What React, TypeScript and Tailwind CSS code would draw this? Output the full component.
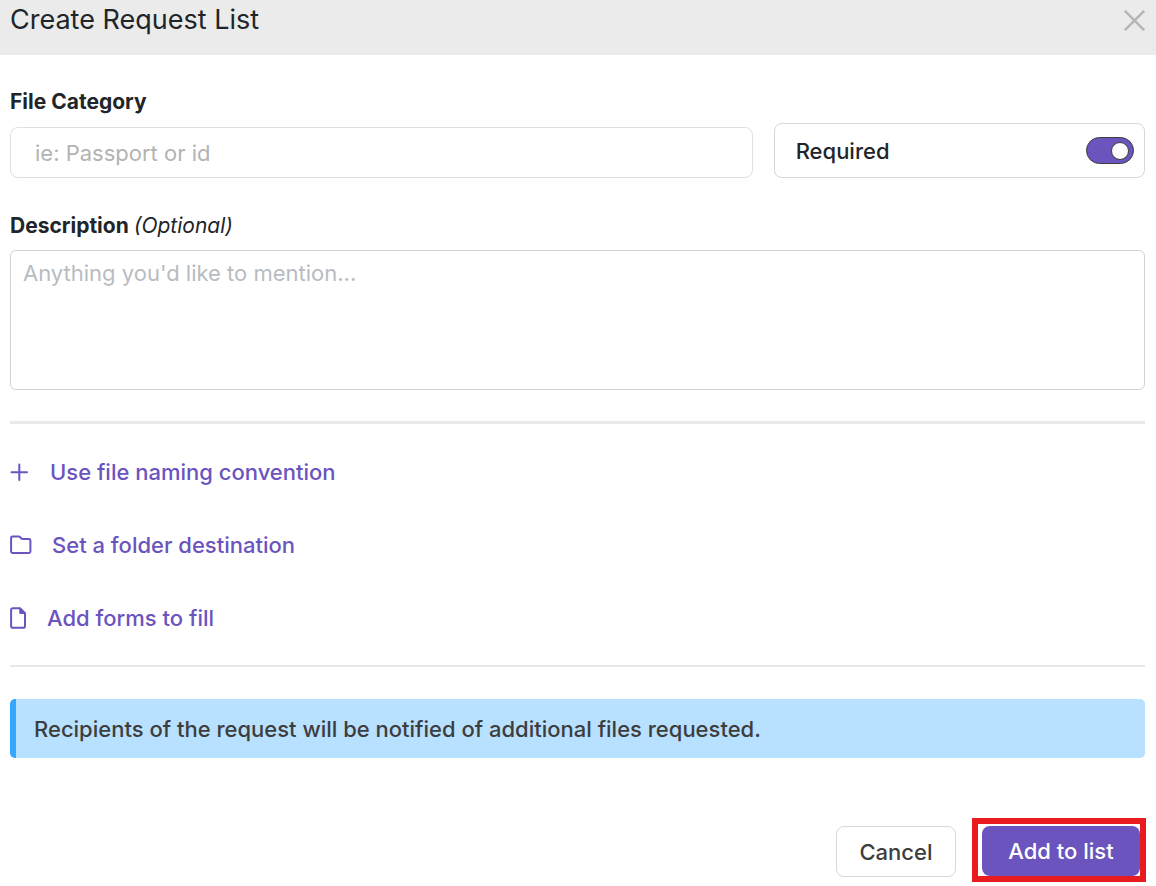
import { useState } from "react";

function PlusIcon() {
  return (
    <svg width="18" height="18" viewBox="0 0 18 18" fill="none" stroke="currentColor" strokeWidth="2" strokeLinecap="round" aria-hidden="true">
      <path d="M9.300 1.500v15.500M1.500 9.300h15.500" />
    </svg>
  );
}

function FolderIcon() {
  return (
    <svg width="22" height="20" viewBox="0 0 22 20" fill="none" stroke="currentColor" strokeWidth="2" strokeLinejoin="round" aria-hidden="true">
      <path d="M2.500 1.500h6.200c.5 0 .9.200 1.200.500l1.500 1.500c.3.300.7.500 1.200.500h6.400c.8 0 1.400.600 1.400 1.400v11.200c0 .8-.6 1.400-1.400 1.400H2.500c-.8 0-1.400-.6-1.400-1.400V2.900c0-.8.6-1.400 1.400-1.400z" />
    </svg>
  );
}

function FileIcon() {
  return (
    <svg width="17" height="22" viewBox="0 0 17 22" fill="none" stroke="currentColor" strokeWidth="2" strokeLinejoin="round" aria-hidden="true">
      <path d="M2.900 1.200h7.100L15 6.200v12.700c0 1-.8 1.800-1.800 1.800H2.900c-1 0-1.800-.8-1.800-1.800V3c0-1 .8-1.800 1.800-1.800z" />
      <path d="M9.800 1.200V6.400H15z" fill="currentColor" strokeWidth="1" />
    </svg>
  );
}

export default function App() {
  const [required, setRequired] = useState(true);

  return (
    <main className="bg-white font-['Inter','Noto_Sans',sans-serif] text-[22px] leading-6 text-[#212529]">
      <header className="flex items-start justify-between bg-[#ebebeb] pt-1 pr-[11px] pb-[19px] pl-[10px]">
        <h1 className="text-[27px] leading-8 font-normal">Create Request List</h1>
        <button type="button" aria-label="Close" className="mt-[6px] text-[#b5b5b5]">
          <svg width="21" height="21" viewBox="0 0 21 21" fill="none" stroke="currentColor" strokeWidth="2.400" aria-hidden="true">
            <path d="M.8.8l19.400 19.400M20.200.8L.8 20.200" />
          </svg>
        </button>
      </header>

      <form id="request-form" className="pr-[11px] pl-[10px]" onSubmit={(e) => e.preventDefault()}>
        <div className="grid grid-cols-[2fr_1fr] items-end gap-[21px] pt-[35px]">
          <div>
            <label htmlFor="category" className="block text-[21px] leading-6 font-bold">File Category</label>
            <input
              id="category"
              type="text"
              placeholder="ie: Passport or id"
              className="mt-[13px] block h-[51px] w-full rounded-lg border border-[#dee0e2] px-6 placeholder:text-[#b3b3b3]"
            />
          </div>
          <label className="relative flex h-[55px] cursor-pointer items-center justify-between rounded-lg border border-[#d5d7d9] pr-[10px] pl-[21px] font-medium">
            Required
            <input
              type="checkbox"
              role="switch"
              checked={required}
              onChange={(e) => setRequired(e.target.checked)}
              className="peer sr-only"
            />
            <span className="flex h-[27px] w-12 items-center rounded-full border border-[#3d3d3d] bg-gray-300 px-1 peer-checked:justify-end peer-checked:bg-[#6b54be]">
              <span className="size-[18px] rounded-full border border-[#3d3d3d] bg-white" />
            </span>
          </label>
        </div>

        <label htmlFor="description" className="mt-9 block text-[21px] leading-6 font-bold">
          Description <em className="font-normal">(Optional)</em>
        </label>
        <textarea
          id="description"
          placeholder="Anything you'd like to mention..."
          className="mt-3 block h-[140px] w-full resize-none rounded-md border border-[#d0d2d7] px-3 py-[10px] placeholder:text-[#b8bcc1]"
        />

        <hr className="mt-[31px] border-t-3 border-[#e9e9e9]" />

        <div className="flex flex-col items-start gap-[49px] pt-9 pb-[35px] font-medium text-[#6b54be]">
          <button type="button" className="flex items-center gap-[22px]">
            <PlusIcon />
            Use file naming convention
          </button>
          <button type="button" className="flex items-center gap-5">
            <FolderIcon />
            Set a folder destination
          </button>
          <button type="button" className="flex items-center gap-5">
            <FileIcon />
            Add forms to fill
          </button>
        </div>

        <hr className="border-t-2 border-[#e8e8e8]" />

        <p className="mt-8 rounded-[5px] border-l-6 border-[#33a8ff] bg-[#b8e0ff] pt-[18px] pb-[17px] pl-[18px] font-medium text-[#3d3d3d]">
          Recipients of the request will be notified of additional files requested.
        </p>
      </form>

      <footer className="mt-[60px] flex items-end justify-end gap-4 pr-[10px] pb-1">
        <button type="button" className="mb-[5px] h-[51px] w-[120px] rounded-lg border border-[#d5d7d9] font-medium text-[#3d3d3d]">
          Cancel
        </button>
        <div className="border-6 border-[#e81b1e] pt-[2px] pl-1">
          <button type="submit" form="request-form" className="block h-[50px] w-[158px] rounded-lg bg-[#6b54be] font-medium text-white">
            Add to list
          </button>
        </div>
      </footer>
    </main>
  );
}
